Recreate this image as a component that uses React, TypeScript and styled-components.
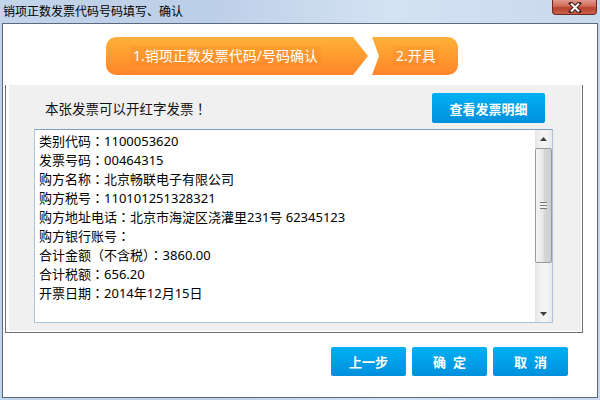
import { createGlobalStyle, styled } from "styled-components";

const GlobalStyle = createGlobalStyle`
  html, body {
    margin: 0;
    padding: 0;
  }
  body {
    width: 600px;
    height: 400px;
    overflow: hidden;
    font-family: "Noto Sans", "Noto Sans CJK SC", sans-serif;
  }
`;

const Window = styled.div`
  width: 600px;
  height: 400px;
  box-sizing: border-box;
  padding: 0 2px 2px 2px;
  display: flex;
  flex-direction: column;
  background: linear-gradient(90deg, #c2d4ea 0%, #bccfe8 35%, #d4e2f3 65%, #c8d8ed 100%);
`;

const TitleBar = styled.div`
  height: 23px;
  display: flex;
  align-items: flex-start;
  justify-content: space-between;
`;

const TitleText = styled.div`
  margin: 4px 0 0 1px;
  font-size: 12px;
  line-height: 16px;
  color: #000;
`;

const CloseButton = styled.div`
  width: 45px;
  height: 15px;
  margin-right: 1px;
  box-sizing: border-box;
  border: 1px solid #6b2a22;
  border-top: none;
  border-radius: 0 0 4px 4px;
  background: linear-gradient(180deg, #e0988a 0%, #cf6a58 45%, #b8412e 55%, #c9614c 100%);
  display: flex;
  align-items: center;
  justify-content: center;
`;

const Client = styled.div`
  flex: 1;
  border: 1px solid #5d6a7d;
  background: #fff;
  display: flex;
  flex-direction: column;
`;

const Steps = styled.div`
  display: flex;
  height: 38px;
  margin: 13px 0 0 103px;
`;

const Step = styled.div<{ $first?: boolean }>`
  height: 38px;
  width: ${({ $first }) => ($first ? "262px" : "86px")};
  margin-left: ${({ $first }) => ($first ? "0" : "4px")};
  padding-left: ${({ $first }) => ($first ? "24px" : "21px")};
  box-sizing: border-box;
  display: flex;
  align-items: center;
  background: linear-gradient(180deg, #ffb13b 0%, #ff9b30 50%, #ff8529 100%);
  border-radius: ${({ $first }) => ($first ? "10px 0 0 10px" : "0 10px 10px 0")};
  clip-path: ${({ $first }) =>
    $first
      ? "polygon(0 0, calc(100% - 15px) 0, 100% 50%, calc(100% - 15px) 100%, 0 100%)"
      : "polygon(0 0, 100% 0, 100% 100%, 0 100%, 7px 50%)"};
`;

const StepLabel = styled.span`
  padding: 0 3px;
  height: 20px;
  line-height: 20px;
  font-size: 14px;
  color: #fff;
  background: rgba(240, 110, 20, 0.14);
`;

const Panel = styled.div`
  margin: 10px 14px 0 2px;
  border: 1px solid #707070;
  border-top: none;
  padding: 0 1px 1px 3px;
`;

const PanelInner = styled.div`
  background: #f0f0f0;
  padding: 8px 28px 8px 25px;
  display: flex;
  flex-direction: column;
`;

const PanelHeader = styled.div`
  height: 30px;
  padding: 0 8px 0 11px;
  display: flex;
  align-items: center;
  justify-content: space-between;
`;

const Notice = styled.div`
  font-size: 13.5px;
  color: #111;
`;

/* full-width punctuation centred in its em box, as on the original */
const Punct = styled.span`
  font-family: "Noto Sans CJK TC", sans-serif;
  line-height: 1;
`;

const BlueButton = styled.button<{ $wide?: boolean; $spaced?: boolean }>`
  width: ${({ $wide }) => ($wide ? "113px" : "75px")};
  height: ${({ $wide }) => ($wide ? "30px" : "29px")};
  padding: 0 0 0 ${({ $spaced }) => ($spaced ? "7px" : "0")};
  border: none;
  border-radius: 2px;
  background: linear-gradient(180deg, #00b0f2 0%, #00a0e8 50%, #008fdc 100%);
  color: #fff;
  font-family: "Noto Sans CJK SC", sans-serif;
  font-size: 13px;
  font-weight: bold;
  letter-spacing: ${({ $spaced }) => ($spaced ? "7px" : "0")};
  cursor: pointer;
`;

const InfoBox = styled.div`
  margin-top: 6px;
  height: 194px;
  box-sizing: border-box;
  border: 1px solid #abc4de;
  border-top-color: #7d9fc3;
  background: #fff;
  display: flex;
`;

const InfoText = styled.div`
  flex: 1;
  padding: 2px 4px;
  font-size: 13px;
  color: #000;
`;

const InfoRow = styled.div`
  height: 19px;
  line-height: 19px;
  white-space: nowrap;
`;

const ScrollBar = styled.div`
  width: 17px;
  display: flex;
  flex-direction: column;
  background: linear-gradient(90deg, #e6e6e6, #f3f3f3 40%, #f3f3f3 70%, #e8e8e8);
`;

const ScrollArrow = styled.div`
  height: 17px;
  display: flex;
  align-items: center;
  justify-content: center;
`;

const ScrollTrack = styled.div`
  flex: 1;
  padding-top: 1px;
`;

const ScrollThumb = styled.div`
  height: 115px;
  box-sizing: border-box;
  border: 1px solid #9a9a9a;
  border-radius: 2px;
  background: linear-gradient(90deg, #f4f4f4 0%, #e9e9e9 45%, #d6d6d6 55%, #cfcfcf 100%);
  display: flex;
  align-items: center;
  justify-content: center;
`;

const Grip = styled.div`
  width: 7px;
  height: 7px;
  background: repeating-linear-gradient(180deg, #7a7a7a 0 1px, #f0f0f0 1px 3px);
`;

const Footer = styled.div`
  margin-top: 14px;
  padding-right: 29px;
  display: flex;
  justify-content: flex-end;
  gap: 6px;
`;

const lines: [string, string][] = [
  ["类别代码", "1100053620"],
  ["发票号码", "00464315"],
  ["购方名称", "北京畅联电子有限公司"],
  ["购方税号", "110101251328321"],
  ["购方地址电话", "北京市海淀区浇灌里231号 62345123"],
  ["购方银行账号", ""],
  ["合计金额（不含税）", "3860.00"],
  ["合计税额", "656.20"],
  ["开票日期", "2014年12月15日"],
];

const renderLabel = (label: string) =>
  label.split(/([（）])/).map((part, i) =>
    part === "（" || part === "）" ? <Punct key={i}>{part}</Punct> : part,
  );

export default function App() {
  return (
    <>
      <GlobalStyle />
      <Window>
        <TitleBar>
          <TitleText>销项正数发票代码号码填写、确认</TitleText>
          <CloseButton>
            <svg width="14" height="11" viewBox="0 0 14 11">
              <path d="M3 1.5 L11 9.5 M11 1.5 L3 9.5" stroke="#4a1c16" strokeWidth="4" strokeLinecap="square" />
              <path d="M3 1.5 L11 9.5 M11 1.5 L3 9.5" stroke="#fff" strokeWidth="2" />
            </svg>
          </CloseButton>
        </TitleBar>
        <Client>
          <Steps>
            <Step $first>
              <StepLabel>1.销项正数发票代码/号码确认</StepLabel>
            </Step>
            <Step>
              <StepLabel>2.开具</StepLabel>
            </Step>
          </Steps>
          <Panel>
            <PanelInner>
              <PanelHeader>
                <Notice>
                  本张发票可以开红字发票<Punct>！</Punct>
                </Notice>
                <BlueButton $wide>查看发票明细</BlueButton>
              </PanelHeader>
              <InfoBox>
                <InfoText>
                  {lines.map(([label, value]) => (
                    <InfoRow key={label}>
                      {renderLabel(label)}
                      <Punct>：</Punct>
                      {value}
                    </InfoRow>
                  ))}
                </InfoText>
                <ScrollBar>
                  <ScrollArrow>
                    <svg width="7" height="4" viewBox="0 0 7 4">
                      <path d="M0 4 L3.5 0 L7 4 Z" fill="#3c3c3c" />
                    </svg>
                  </ScrollArrow>
                  <ScrollTrack>
                    <ScrollThumb>
                      <Grip />
                    </ScrollThumb>
                  </ScrollTrack>
                  <ScrollArrow>
                    <svg width="7" height="4" viewBox="0 0 7 4">
                      <path d="M0 0 L7 0 L3.5 4 Z" fill="#3c3c3c" />
                    </svg>
                  </ScrollArrow>
                </ScrollBar>
              </InfoBox>
            </PanelInner>
          </Panel>
          <Footer>
            <BlueButton>上一步</BlueButton>
            <BlueButton $spaced>确定</BlueButton>
            <BlueButton $spaced>取消</BlueButton>
          </Footer>
        </Client>
      </Window>
    </>
  );
}
